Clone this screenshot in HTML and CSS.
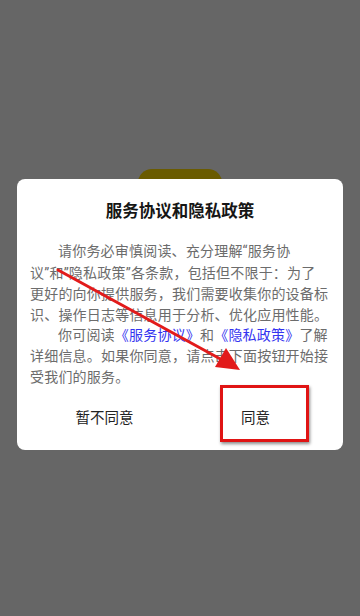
FILE: index.html
```html
<!DOCTYPE html>
<html lang="zh">
<head>
<meta charset="utf-8">
<link rel="stylesheet" href="styles.css">
</head>
<body>
<div class="page">
  <div class="pill"></div>
</div>
<div class="overlay">
  <div class="dialog">
    <div class="title">服务协议和隐私政策</div>
    <div class="body">
      <p class="para">请你务必审慎阅读、充分理解<span class="q">“</span>服务协<br>议<span class="q">”</span>和<span class="q">”</span>隐私政策<span class="q">”</span>各条款，包括但不限于：为了<br>更好的向你提供服务，我们需要收集你的设备标<br>识、操作日志等信息用于分析、优化应用性能。</p>
      <p class="para">你可阅读<span class="link">《服务协议》</span>和<span class="link">《隐私政策》</span>了解<br>详细信息。如果你同意，请点击下面按钮开始接<br>受我们的服务。</p>
    </div>
    <div class="actions">
      <div class="btn">暂不同意</div>
      <div class="btn">同意</div>
    </div>
  </div>
</div>
<div class="mark-box"></div>
<svg class="arrow" width="360" height="616" viewBox="0 0 360 616">
  <line x1="58" y1="270" x2="224" y2="361" stroke="#e21b1b" stroke-width="3" stroke-linecap="round"/>
  <polygon points="240,370 215,367 226,348" fill="#e21b1b"/>
</svg>
</body>
</html>
```

FILE: styles.css
```css
html, body {
  margin: 0;
  padding: 0;
  background: #666666;
  width: 360px;
  height: 616px;
  overflow: hidden;
  font-family: "Noto Sans CJK SC", "Noto Sans", sans-serif;
}
.page {
  display: flex;
  justify-content: center;
  padding-top: 169px;
}
.pill {
  width: 84px;
  height: 40px;
  border-radius: 14px;
  background: #6a5b00;
}
.overlay {
  position: absolute;
  left: 0;
  top: 0;
  width: 360px;
  height: 616px;
  padding-top: 179px;
  box-sizing: border-box;
}
.dialog {
  margin: 0 17px;
  background: #ffffff;
  border-radius: 8px;
  padding-top: 20px;
  padding-bottom: 9px;
}
.title {
  text-align: center;
  font-size: 16.5px;
  font-weight: bold;
  line-height: 22px;
  color: #161616;
}
.body {
  padding: 19px 13px 0 13px;
}
.para {
  margin: 0;
  font-size: 14px;
  line-height: 20.6px;
  letter-spacing: 0.2px;
  color: #6c6c6c;
  text-indent: 2em;
  white-space: nowrap;
}
.q {
  font-family: "Roboto", sans-serif;
}
.link {
  color: #3434f0;
}
.actions {
  display: flex;
  padding: 0 12px;
  margin-top: 5px;
}
.btn {
  flex: 1;
  height: 50px;
  display: flex;
  align-items: center;
  justify-content: center;
  font-size: 14.5px;
  color: #222222;
}
.mark-box {
  position: absolute;
  left: 220px;
  top: 385px;
  width: 83px;
  height: 51px;
  border: 3px solid #e01414;
  box-shadow: 1px 2px 3px rgba(0, 0, 0, 0.45);
}
.arrow {
  position: absolute;
  left: 0;
  top: 0;
}
```
